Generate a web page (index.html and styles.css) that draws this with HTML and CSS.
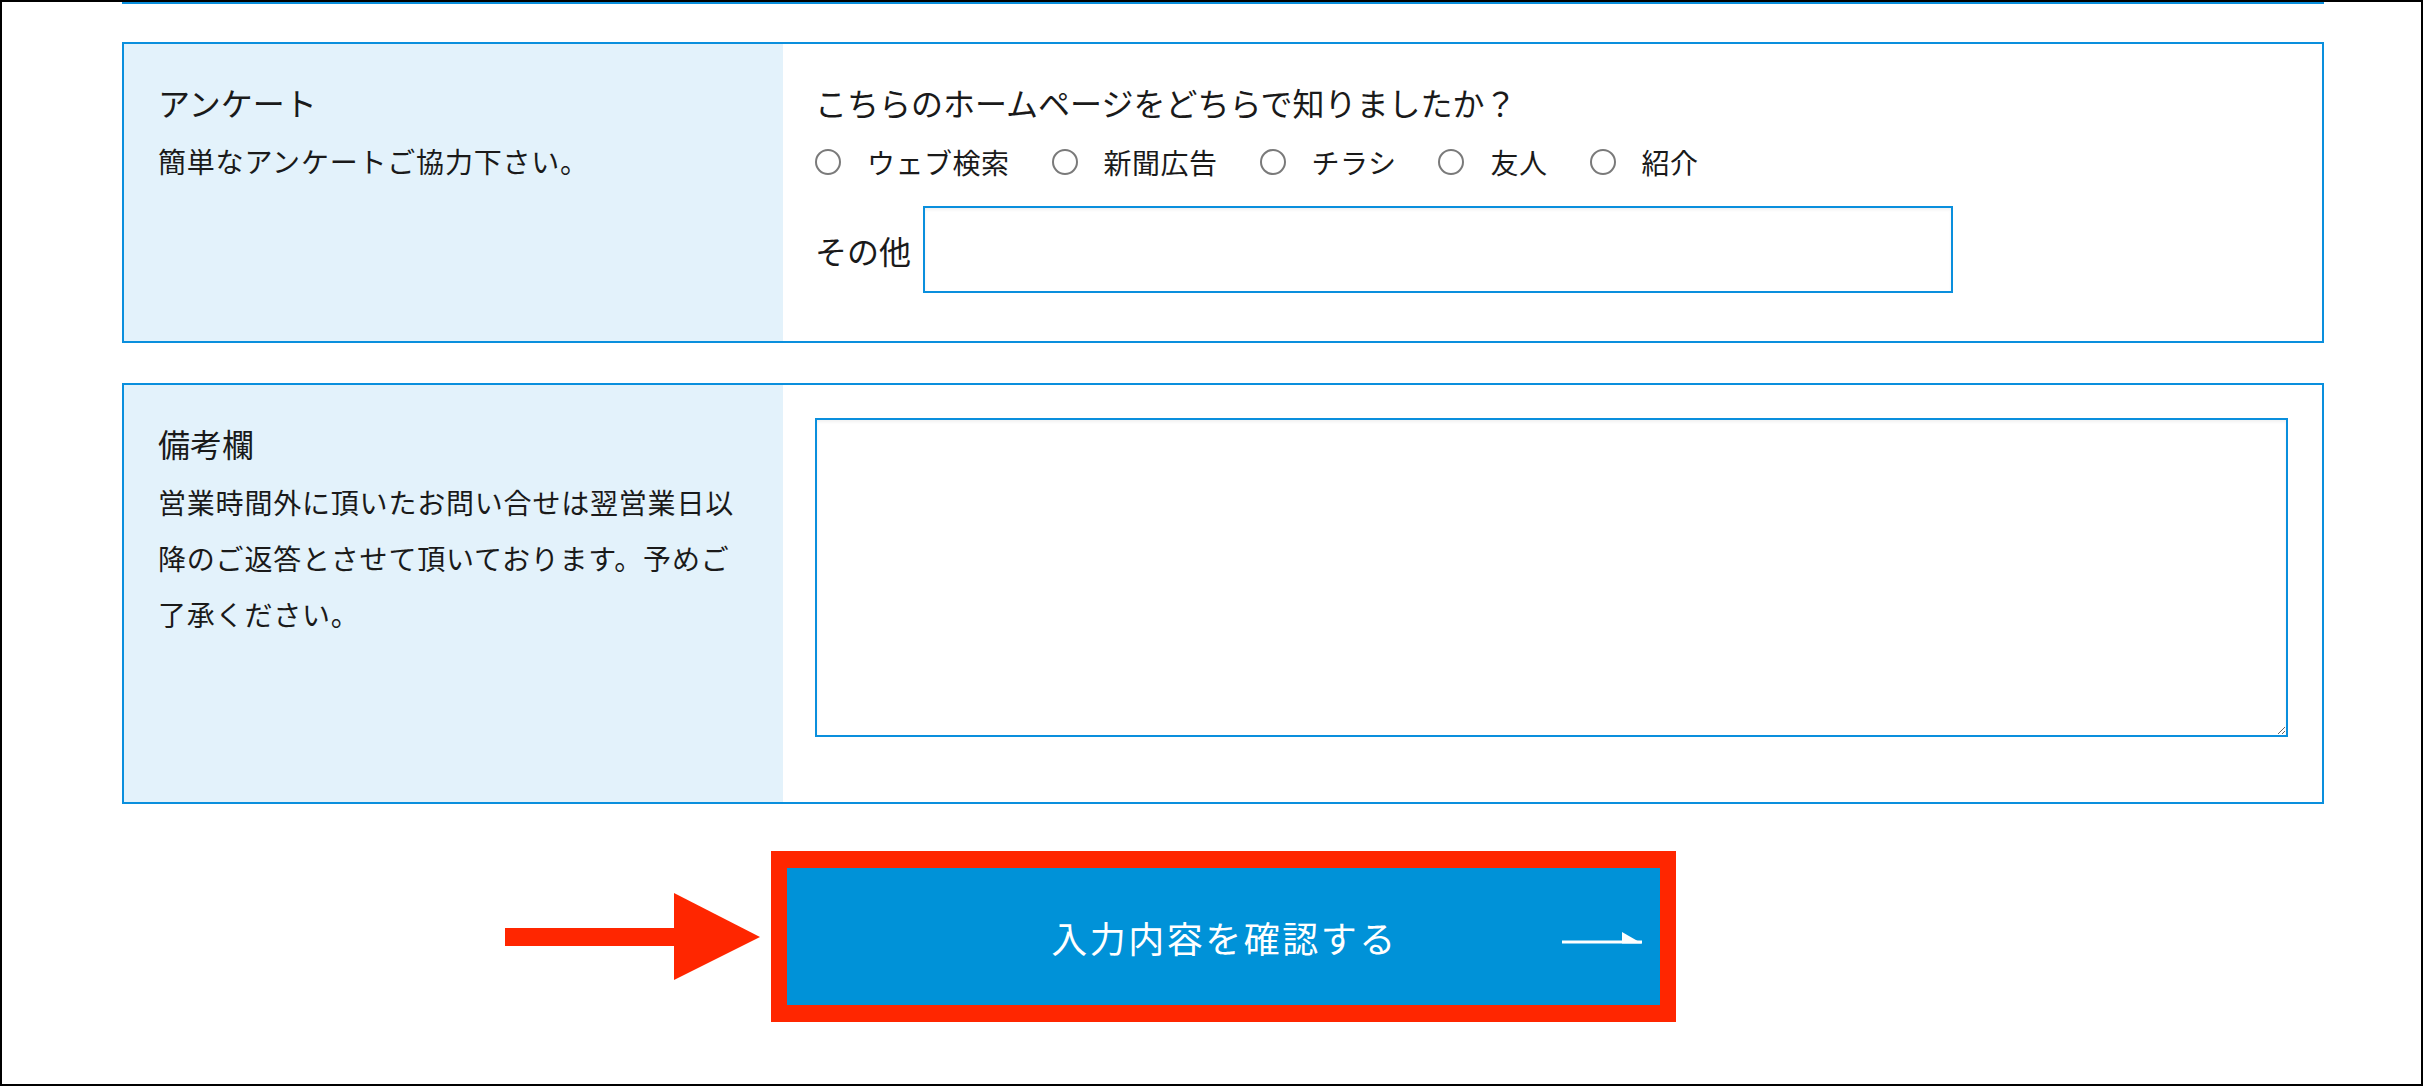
FILE: index.html
```html
<!DOCTYPE html>
<html lang="ja">
<head>
<meta charset="utf-8">
<title>お問い合わせフォーム</title>
<link rel="stylesheet" href="styles.css">
</head>
<body>
<div class="frame">
  <div class="prev"></div>
  <form class="form">
    <div class="row">
      <div class="th">
        <p class="th-title">アンケート</p>
        <p class="th-note">簡単なアンケートご協力下さい。</p>
      </div>
      <div class="td td-survey">
        <p class="question">こちらのホームページをどちらで知りましたか？</p>
        <div class="radios">
          <label class="radio"><input type="radio" name="source"><span>ウェブ検索</span></label>
          <label class="radio"><input type="radio" name="source"><span>新聞広告</span></label>
          <label class="radio"><input type="radio" name="source"><span>チラシ</span></label>
          <label class="radio"><input type="radio" name="source"><span>友人</span></label>
          <label class="radio"><input type="radio" name="source"><span>紹介</span></label>
        </div>
        <div class="other">
          <span class="other-label">その他</span>
          <input type="text" class="other-input">
        </div>
      </div>
    </div>
    <div class="row">
      <div class="th">
        <p class="th-title">備考欄</p>
        <p class="th-note">営業時間外に頂いたお問い合せは翌営業日以降のご返答とさせて頂いております。予めご了承ください。</p>
      </div>
      <div class="td td-text">
        <textarea class="note-area"></textarea>
      </div>
    </div>
    <div class="submit-wrap">
      <div class="highlight">
        <svg class="pointer" width="255" height="87" viewBox="0 0 255 87"><rect x="0" y="35" width="172" height="18" fill="#ff2600"/><polygon points="169,0 255,44 169,87" fill="#ff2600"/></svg>
        <button type="button" class="submit">入力内容を確認する<svg class="btn-arrow" width="80" height="12" viewBox="0 0 80 12"><rect x="0" y="8.5" width="80" height="3" fill="#fff"/><polygon points="60,0 80,11.5 60,11.5" fill="#fff"/></svg></button>
      </div>
    </div>
  </form>
</div>
</body>
</html>
```

FILE: styles.css
```css
* {
  box-sizing: border-box;
}

html,
body {
  margin: 0;
  padding: 0;
  background: #fff;
}

body {
  font-family: "Noto Sans CJK JP", "Noto Sans", sans-serif;
  color: #1a1a1a;
}

.frame {
  width: 2423px;
  height: 1086px;
  border: 2px solid #000;
  overflow: hidden;
}

.prev {
  width: 2202px;
  margin-left: 120px;
  border-bottom: 2px solid #0a8fdd;
}

.form {
  width: 2202px;
  margin: 0 0 0 120px;
}

.row {
  display: grid;
  grid-template-columns: 659px 1fr;
  border: 2px solid #0a8fdd;
  margin-top: 38px;
}

.row + .row {
  margin-top: 40px;
}

.th {
  background: #e3f2fb;
  padding: 34px 34px;
}

.th p {
  margin: 0;
}

.th-title {
  font-size: 32px;
  line-height: 48px;
}

.th-note {
  margin-top: 7px !important;
  font-size: 28px;
  line-height: 56px;
  letter-spacing: 0.8px;
}

.td {
  background: #fff;
}

.td-survey {
  padding: 34px 32px 48px 32px;
}

.question {
  margin: 0;
  font-size: 32px;
  line-height: 48px;
}

.radios {
  display: flex;
  align-items: center;
  margin-top: 15px;
  height: 42px;
}

.radio {
  display: flex;
  align-items: center;
  margin-right: 42px;
  font-size: 28px;
  line-height: 42px;
  letter-spacing: 0.5px;
}

.radio input {
  appearance: none;
  -webkit-appearance: none;
  width: 26px;
  height: 26px;
  margin: 0 26px 0 0;
  border: 2px solid #7a7a7a;
  border-radius: 50%;
  background: #fff;
}

.other {
  display: flex;
  align-items: center;
  margin-top: 23px;
}

.other-label {
  font-size: 32px;
  line-height: 48px;
}

.other-input {
  width: 1030px;
  height: 87px;
  margin: 0 0 0 12px;
  border: 2px solid #0a8fdd;
  border-radius: 0;
  box-shadow: inset 0 2px 3px rgba(0, 0, 0, 0.06);
  background: #fff;
  outline: none;
}

.td-text {
  padding: 33px 34px 65px 32px;
}

.note-area {
  display: block;
  width: 100%;
  height: 319px;
  margin: 0;
  border: 2px solid #0a8fdd;
  border-radius: 0;
  box-shadow: inset 0 2px 3px rgba(0, 0, 0, 0.06);
  background: #fff;
  resize: both;
  outline: none;
}

.submit-wrap {
  display: flex;
  justify-content: center;
  margin-top: 47px;
}

.highlight {
  position: relative;
  border-style: solid;
  border-color: #ff2600;
  border-width: 17px 16px;
}

.pointer {
  position: absolute;
  right: calc(100% + 27px);
  top: 25px;
  display: block;
}

.submit {
  position: relative;
  display: flex;
  align-items: center;
  justify-content: center;
  width: 873px;
  height: 137px;
  margin: 0;
  padding: 0 0 0 3px;
  border: none;
  border-radius: 0;
  background: #0092d8;
  color: #fff;
  font-family: "Noto Sans CJK JP", "Noto Sans", sans-serif;
  font-size: 36px;
  letter-spacing: 2.5px;
}

.btn-arrow {
  position: absolute;
  right: 18px;
  top: 64px;
  display: block;
}
```
